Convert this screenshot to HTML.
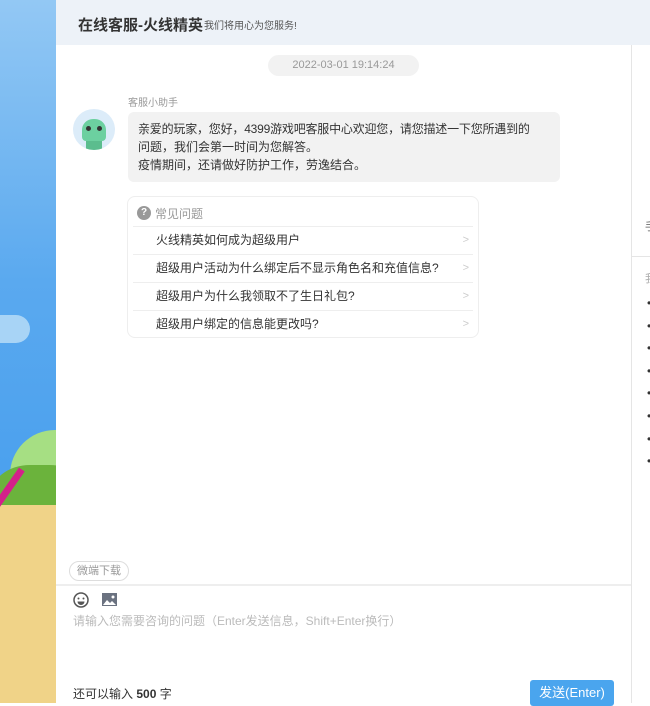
<!DOCTYPE html>
<html><head><meta charset="utf-8"><style>
*{margin:0;padding:0;box-sizing:border-box}
body{width:650px;height:703px;overflow:hidden;position:relative;font-family:"Liberation Sans","Noto Sans CJK SC",sans-serif;background:#fff}
.left{position:absolute;left:0;top:0;width:56px;height:703px;background:linear-gradient(#93c8f4,#5aa9ef 40%,#4aa0ee 70%);overflow:hidden}
.abs{position:absolute}
.hdr{position:absolute;left:56px;top:0;width:594px;height:45px;background:#edf2f8}
.faq div.r{position:absolute;left:5px;width:340px;height:28px;border-top:1px solid #eee;font-size:12px;color:#333;padding-left:23px;line-height:27px}
.faq div.r span{position:absolute;right:4px;color:#ccc;font-size:11px}
</style></head><body>
<div class="left">
 <div class="abs" style="left:-20px;top:315px;width:50px;height:28px;background:#a8d4f6;border-radius:20px"></div>
 <div class="abs" style="left:10px;top:430px;width:90px;height:90px;background:#a6df83;border-radius:50%"></div>
 <div class="abs" style="left:-10px;top:465px;width:100px;height:80px;background:#6bb33c;border-radius:40%"></div>
 <div class="abs" style="left:0;top:505px;width:56px;height:203px;background:#f0d388"></div>
 <div class="abs" style="left:4px;top:465px;width:7px;height:50px;background:#d4208a;transform:rotate(35deg)"></div>
</div>
<div class="hdr">
 <span class="abs" style="left:22px;top:14px;font-size:15px;font-weight:bold;color:#333">在线客服-火线精英</span>
 <span class="abs" style="left:148px;top:17px;font-size:10px;color:#555">我们将用心为您服务!</span>
</div>
<div class="abs" style="left:631px;top:45px;width:1px;height:658px;background:#e5e5e5"></div>
<div class="abs" style="left:632px;top:256px;width:18px;height:1px;background:#e5e5e5"></div>
<div class="abs" style="left:645px;top:218px;font-size:11px;color:#555">手</div>
<div class="abs" style="left:645px;top:270px;font-size:11px;color:#aaa">我</div>
<div class="abs" style="left:647px;top:292px;line-height:22.6px;font-size:12px;color:#333">•<br>•<br>•<br>•<br>•<br>•<br>•<br>•</div>

<div class="abs" style="left:268px;top:55px;width:151px;height:21px;background:#f2f2f2;border-radius:11px;font-size:11px;color:#999;text-align:center;line-height:21px">2022-03-01 19:14:24</div>
<div class="abs" style="left:128px;top:94px;font-size:10px;color:#999">客服小助手</div>
<div class="abs" style="left:73px;top:109px;width:42px;height:41px;border-radius:50%;background:#dcecf9;overflow:hidden">
 <div class="abs" style="left:9px;top:10px;width:24px;height:22px;border-radius:11px 11px 4px 4px;background:#6cd0a0"></div>
 <div class="abs" style="left:13px;top:17px;width:5px;height:5px;border-radius:50%;background:#333"></div>
 <div class="abs" style="left:24px;top:17px;width:5px;height:5px;border-radius:50%;background:#333"></div>
 <div class="abs" style="left:13px;top:32px;width:16px;height:9px;background:#5bbd8e"></div>
</div>
<div class="abs" style="left:128px;top:112px;width:432px;height:70px;background:#f2f2f2;border-radius:6px;padding:8px 12px 8px 10px;font-size:12px;line-height:18px;color:#333"><span style="letter-spacing:-0.2px">亲爱的玩家，您好，4399游戏吧客服中心欢迎您，请您描述一下您所遇到的</span><br>问题，我们会第一时间为您解答。<br>疫情期间，还请做好防护工作，劳逸结合。</div>

<div class="abs faq" style="left:127px;top:196px;width:352px;height:142px;border:1px solid #eee;border-radius:8px">
 <div class="abs" style="left:9px;top:9px;width:14px;height:14px;border-radius:50%;background:#999;color:#fff;font-size:10px;text-align:center;line-height:14px;font-weight:bold">?</div>
 <div class="abs" style="left:27px;top:8px;font-size:12px;color:#999">常见问题</div>
 <div class="r" style="top:29px">火线精英如何成为超级用户<span>&gt;</span></div>
 <div class="r" style="top:57px">超级用户活动为什么绑定后不显示角色名和充值信息?<span>&gt;</span></div>
 <div class="r" style="top:85px">超级用户为什么我领取不了生日礼包?<span>&gt;</span></div>
 <div class="r" style="top:113px">超级用户绑定的信息能更改吗?<span>&gt;</span></div>
</div>

<div class="abs" style="left:69px;top:561px;width:60px;height:20px;border:1px solid #ddd;border-radius:10px;font-size:11px;color:#999;text-align:center;line-height:18px">微端下载</div>
<div class="abs" style="left:56px;top:584px;width:575px;height:2px;background:#eee"></div>
<svg class="abs" style="left:73px;top:592px" width="16" height="16" viewBox="0 0 16 16"><circle cx="8" cy="8" r="7" fill="none" stroke="#555" stroke-width="1.5"/><circle cx="5.5" cy="6.5" r="1" fill="#555"/><circle cx="10.5" cy="6.5" r="1" fill="#555"/><path d="M4.5 9.5h7a3.5 3.5 0 0 1-7 0z" fill="#555"/></svg>
<svg class="abs" style="left:102px;top:593px" width="15" height="13" viewBox="0 0 15 13"><rect width="15" height="13" fill="#6b7280"/><path d="M1 12l4-5 3 3 2-2 4 4z" fill="#fff"/><circle cx="11" cy="4" r="1.5" fill="#fff"/></svg>
<div class="abs" style="left:73px;top:612px;font-size:12px;color:#bbb">请输入您需要咨询的问题（Enter发送信息，Shift+Enter换行）</div>
<div class="abs" style="left:73px;top:685px;font-size:12px;color:#333">还可以输入 <b>500</b> 字</div>
<div class="abs" style="left:530px;top:680px;width:84px;height:26px;background:#4aa5ee;border-radius:3px;color:#fff;font-size:13px;text-align:center;line-height:26px">发送(Enter)</div>
</body></html>
